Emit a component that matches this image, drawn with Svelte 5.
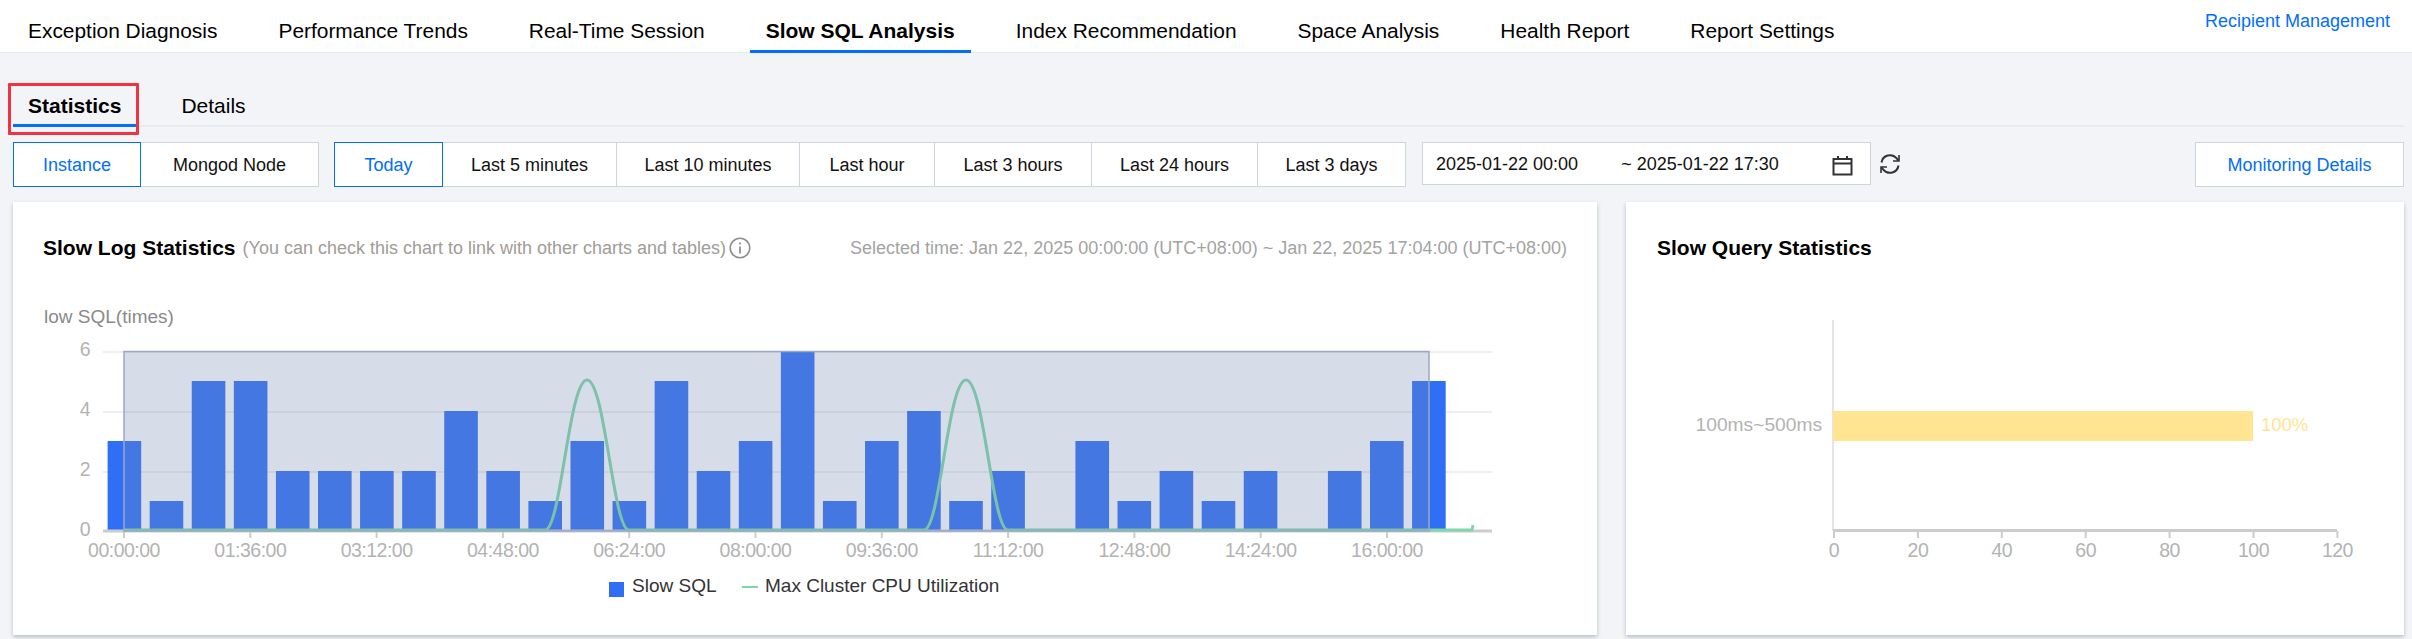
<script>
  const navTabs = ['Exception Diagnosis','Performance Trends','Real-Time Session','Slow SQL Analysis','Index Recommendation','Space Analysis','Health Report','Report Settings'];
  const scope = [{t:'Instance',w:128,on:true},{t:'Mongod Node',w:178}];
  const ranges = [{t:'Today',w:109,on:true},{t:'Last 5 minutes',w:174},{t:'Last 10 minutes',w:183},{t:'Last hour',w:135},{t:'Last 3 hours',w:157},{t:'Last 24 hours',w:166},{t:'Last 3 days',w:148}];
  const values = [3,1,5,5,2,2,2,2,4,2,1,3,1,5,2,3,6,1,3,4,1,2,0,3,1,2,1,2,0,2,3,5];
  const xLabels = ['00:00:00','01:36:00','03:12:00','04:48:00','06:24:00','08:00:00','09:36:00','11:12:00','12:48:00','14:24:00','16:00:00'];
  const yLabels = [0,2,4,6];
  const barTicks = [0,20,40,60,80,100,120];
  const base = 531;
  const bump = (a) => `C${a+16} 530 ${a+24} 380 ${a+42} 380 C${a+60} 380 ${a+68} 530 ${a+84} 530`;
  const linePath = `M124 530 L545 530 ${bump(545)} L924 530 ${bump(924)} L1472 530 L1473 525`;
</script>

<div class="page">
  <nav class="nav">
    <div class="nav-tabs">
      {#each navTabs as t, i}
        <div class="nav-tab" class:active={i === 3}>{t}</div>
      {/each}
    </div>
    <a class="recipient" href="#r">Recipient Management</a>
  </nav>

  <div class="main">
    <div class="subtabs">
      <div class="subtab active">Statistics<span class="redbox"></span></div>
      <div class="subtab">Details</div>
    </div>

    <div class="toolbar">
      <div class="group">
        {#each scope as b}
          <div class="btn" class:on={b.on} style="width:{b.w}px">{b.t}</div>
        {/each}
      </div>
      <div class="group ranges">
        {#each ranges as b}
          <div class="btn" class:on={b.on} style="width:{b.w}px">{b.t}</div>
        {/each}
      </div>
      <div class="picker">
        <span class="d1">2025-01-22 00:00</span>
        <span class="d2">~ 2025-01-22 17:30</span>
        <svg class="cal" width="21" height="21" viewBox="0 0 21 21" fill="none" stroke="#333" stroke-width="2"><rect x="1.5" y="4" width="18" height="15.5"/><path d="M1.5 8.5H19.5M6 1V5M15 1V5"/></svg>
      </div>
      <svg class="refresh" width="24" height="24" viewBox="0 0 24 24" fill="none" stroke="#333" stroke-width="2"><path d="M3.5 10.5A8.6 8.6 0 0 1 18.5 6.2L20.5 8.5"/><path d="M20.5 13.5A8.6 8.6 0 0 1 5.5 17.8L3.5 15.5"/><path d="M21 3V9H15M3 21V15H9" stroke-width="1.6"/></svg>
      <div class="btn monitor">Monitoring Details</div>
    </div>

    <div class="cards">
      <section class="card left">
        <header class="card-head">
          <h2>Slow Log Statistics</h2>
          <span class="hint">(You can check this chart to link with other charts and tables)</span>
          <svg class="info" width="22" height="22" viewBox="0 0 22 22" fill="none" stroke="#8f8f8f"><circle cx="11" cy="11" r="9.8" stroke-width="1.6"/><path d="M11 9.5V16.5" stroke-width="1.8"/><path d="M11 5.5V7.5" stroke-width="1.8"/></svg>
          <span class="selected">Selected time: Jan 22, 2025 00:00:00 (UTC+08:00) ~ Jan 22, 2025 17:04:00 (UTC+08:00)</span>
        </header>
      </section>
      <section class="card right">
        <header class="card-head"><h2>Slow Query Statistics</h2></header>
      </section>

      <svg class="chart" width="2412" height="639" viewBox="0 0 2412 639">
        <text x="44" y="323" class="axisname">low SQL(times)</text>
        {#each yLabels as v}
          <text x="90" y={base - v * 30 + 5} text-anchor="end" class="tick">{v}</text>
          {#if v > 0}<line x1="103" x2="1492" y1={base - v * 30 + 1} y2={base - v * 30 + 1} stroke="#eeeeee" stroke-width="2"/>{/if}
        {/each}
        {#each values as v, i}
          <rect x={107.6 + i * 42.08} y={base - v * 30} width="33.6" height={v * 30} fill="#2e6ff5"/>
        {/each}
        <line x1="103" x2="1492" y1="531" y2="531" stroke="#cccccc" stroke-width="3"/>
        {#each xLabels as l, i}
          <line x1={124 + i * 126.3} x2={124 + i * 126.3} y1="531" y2="538" stroke="#cccccc" stroke-width="2"/>
          <text x={124 + i * 126.3} y="557" text-anchor="middle" class="tick">{l}</text>
        {/each}
        <path d={linePath} fill="none" stroke="#7ed8a5" stroke-width="3"/>
        <rect x="124" y="351.5" width="1305" height="179.5" fill="rgba(118,138,178,.3)" stroke="#9aa8c8" stroke-width="1.5"/>

        <rect x="609" y="582" width="15" height="15" fill="#2e6ff5"/>
        <text x="632" y="592" class="legend">Slow SQL</text>
        <line x1="742" x2="758" y1="587" y2="587" stroke="#7ed8a5" stroke-width="2"/>
        <text x="765" y="592" class="legend">Max Cluster CPU Utilization</text>

        <line x1="1833" x2="1833" y1="320" y2="531" stroke="#dddddd" stroke-width="1.5"/>
        <line x1="1833" x2="2337" y1="530.5" y2="530.5" stroke="#cccccc" stroke-width="3"/>
        <rect x="1833" y="411" width="420" height="30" fill="#ffe591"/>
        <text x="2261" y="431" class="pct">100%</text>
        <text x="1822" y="431" text-anchor="end" class="catlabel">100ms~500ms</text>
        {#each barTicks as t, i}
          <line x1={1834 + i * 83.9} x2={1834 + i * 83.9} y1="531" y2="538" stroke="#cccccc" stroke-width="2"/>
          <text x={1834 + i * 83.9} y="557" text-anchor="middle" class="tick">{t}</text>
        {/each}
      </svg>
    </div>
  </div>
</div>

<style>
  :global(body) { margin: 0; background: #f2f4f8; font-family: "Liberation Sans", Arial, sans-serif; overflow: hidden; }
  .page { height: 639px; overflow: hidden; color: #000; }

  .nav { height: 52px; background: #fff; border-bottom: 1px solid #e6e9ef; display: flex; justify-content: space-between; padding: 0 22px 0 12px; }
  .nav-tabs { display: flex; gap: 29px; }
  .nav-tab { height: 50px; padding: 12px 16px 0; box-sizing: border-box; font-size: 20.92px; line-height: 38px; border-bottom: 0 solid #006eff; white-space: nowrap; }
  .nav-tab.active { font-weight: 700; height: 53px; border-bottom-width: 3px; font-size: 21px; position: relative; }
  .recipient { color: #006eff; font-size: 18px; line-height: 42px; text-decoration: none; }

  .main { padding: 0 8px 0 13px; }
  .subtabs { display: flex; gap: 30px; height: 74px; margin-bottom: 15px; box-sizing: border-box; padding-top: 31px; border-bottom: 2px solid #e8ebf0; }
  .subtab { position: relative; padding: 0 15px; height: 43px; font-size: 21px; line-height: 43px; box-sizing: border-box; }
  .subtab.active { font-weight: 700; border-bottom: 3px solid #006eff; }
  .redbox { position: absolute; left: -5px; top: -1px; width: 131px; height: 52px; box-sizing: border-box; border: 3.5px solid #f0333f; border-radius: 1px; pointer-events: none; }

  .toolbar { display: flex; align-items: flex-start; height: 45px; }
  .group { display: flex; }
  .ranges { margin-left: 15px; }
  .btn { height: 45px; box-sizing: border-box; background: #fff; border: 1px solid #cfd5de; border-left-width: 0; font-size: 18px; line-height: 45px; text-align: center; color: #111; white-space: nowrap; }
  .btn:first-child { border-left-width: 1px; }
  .btn.on { border: 1.5px solid #006eff; color: #006eff; }
  .picker { margin-left: 16px; width: 449px; height: 43px; box-sizing: border-box; background: #fff; border: 1px solid #cfd5de; display: flex; align-items: center; font-size: 18px; color: #111; white-space: nowrap; padding: 1px 0 0 13px; }
  .d2 { margin-left: 43px; }
  .cal { margin-left: 53px; margin-top: 2px; }
  .refresh { margin: 10px 0 0 7px; }
  .monitor { margin-left: auto; width: 209px; color: #006eff; border-left-width: 1px; }

  .cards { display: flex; gap: 29px; margin-top: 15px; height: 433px; position: static; }
  .card { background: #fff; box-shadow: 0 2px 4px rgba(54,58,80,.3); box-sizing: border-box; height: 433px; }
  .left { width: 1584px; }
  .right { width: 778px; }
  .card-head { display: flex; align-items: center; height: 46px; margin-top: 23px; padding: 0 30px; position: relative; white-space: nowrap; }
  .right .card-head { padding: 0 31px; }
  h2 { margin: 0; font-size: 21px; font-weight: 700; color: #000; }
  .hint { margin-left: 7px; font-size: 18px; color: #a09c97; }
  .info { margin-left: 3px; }
  .selected { margin-left: auto; font-size: 18px; color: #a3a3a3; }

  .chart { position: absolute; left: 0; top: 0; pointer-events: none; }
  .axisname { font-size: 19px; fill: #8a8a8a; }
  .tick { font-size: 19.5px; letter-spacing: -.5px; fill: #b3b3b3; }
  .catlabel { font-size: 19.2px; fill: #b3b3b3; }
  .legend { font-size: 19px; fill: #333; }
  .pct { font-size: 18.5px; fill: #ffe591; }
</style>
